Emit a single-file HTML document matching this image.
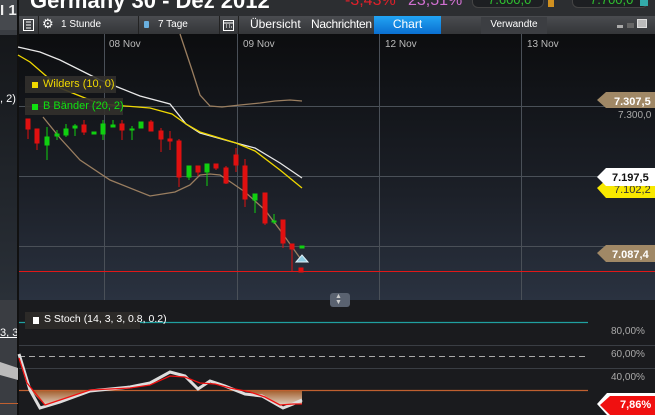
<!DOCTYPE html>
<html><head><meta charset="utf-8"><style>
*{margin:0;padding:0;box-sizing:border-box}
body{width:655px;height:415px;overflow:hidden;background:#1b1d21;font-family:"Liberation Sans",sans-serif;position:relative}
.abs{position:absolute}
.tb{font-size:11px;color:#fff}
</style></head><body>
<div class="abs" style="left:0;top:0;width:18px;height:415px;background:#3a3d42"></div>
<div class="abs" style="left:0;top:0;width:18px;height:30px;background:#46494e"></div>
<div class="abs tb" style="left:0;top:2px;font-size:15px;font-weight:bold;color:#eee">I 1</div>
<div class="abs" style="left:0;top:35px;width:18px;height:265px;background:linear-gradient(#15171a,#2a3038)"></div>
<div class="abs tb" style="left:0;top:93px;font-size:11px">, 2)</div>
<div class="abs tb" style="left:0;top:327px;font-size:11px;text-decoration:underline">3, 3</div>
<div class="abs" style="left:17px;top:0;width:2px;height:415px;background:#111"></div>
<div class="abs" style="left:19px;top:0;width:636px;height:16px;background:#2c2e31"></div>
<div class="abs" style="left:30px;top:-12px;font-size:22px;font-weight:bold;color:#fff">Germany 30 - Dez 2012</div>
<div class="abs" style="left:345px;top:-8px;font-size:16px;color:#e0202a">-3,43%</div>
<div class="abs" style="left:408px;top:-8px;font-size:16px;color:#d070d0">23,51%</div>
<div class="abs" style="left:472px;top:-6px;width:72px;height:14px;border-radius:6px;background:#1d1f22;border:1px solid #444"></div>
<div class="abs" style="left:488px;top:-8px;font-size:13px;color:#30c030">7.600,0</div>
<div class="abs" style="left:548px;top:0;width:6px;height:7px;background:#d09020"></div>
<div class="abs" style="left:572px;top:-6px;width:76px;height:14px;border-radius:6px;background:#1d1f22;border:1px solid #444"></div>
<div class="abs" style="left:590px;top:-8px;font-size:13px;color:#30c030">7.700,0</div>
<div class="abs" style="left:640px;top:-2px;width:8px;height:8px;background:#3aa"></div>
<div class="abs" style="left:19px;top:16px;width:636px;height:18px;background:linear-gradient(#4a4c50,#333538)"></div>
<div class="abs" style="left:19px;top:16px;width:20px;height:18px;border-right:1px solid #222"></div>
<svg class="abs" style="left:23px;top:19px" width="11" height="12"><rect x="0.5" y="0.5" width="10" height="11" fill="none" stroke="#fff"/><path d="M3 3h5M3 6h5M3 9h5" stroke="#fff"/></svg>
<div class="abs tb" style="left:42px;top:16px;font-size:13px">⚙</div>
<div class="abs tb" style="left:61px;top:19px;font-size:10px">1 Stunde</div>
<div class="abs" style="left:138px;top:16px;width:1px;height:18px;background:#222"></div>
<div class="abs" style="left:144px;top:21px;width:5px;height:7px;background:#6ab0e0;border-radius:1px"></div>
<div class="abs tb" style="left:158px;top:19px;font-size:10px">7 Tage</div>
<div class="abs" style="left:219px;top:16px;width:1px;height:18px;background:#222"></div>
<svg class="abs" style="left:223px;top:19px" width="11" height="12"><rect x="0.5" y="1.5" width="10" height="10" fill="none" stroke="#fff"/><path d="M1 4h9M3 6h1M6 6h1M3 8h1M6 8h1M8 8h1" stroke="#fff"/></svg>
<div class="abs" style="left:238px;top:16px;width:1px;height:18px;background:#222"></div>
<div class="abs tb" style="left:250px;top:17px;font-size:12px">Übersicht</div>
<div class="abs tb" style="left:311px;top:17px;font-size:12px;letter-spacing:-0.3px">Nachrichten</div>
<div class="abs tb" style="left:374px;top:16px;width:67px;height:18px;background:linear-gradient(#22a4f4,#0a6fd0);font-size:12px;text-align:center;line-height:16px">Chart</div>
<div class="abs tb" style="left:481px;top:17px;width:66px;height:17px;background:#3c3e42;font-size:10px;text-align:center;line-height:15px">Verwandte</div>
<div class="abs" style="left:617px;top:25px;width:6px;height:3px;background:#aaa"></div>
<div class="abs" style="left:627px;top:23px;width:7px;height:5px;background:#666"></div>
<div class="abs" style="left:637px;top:19px;width:10px;height:9px;background:#bbb;border:1px solid #ddd"></div>
<div class="abs" style="left:19px;top:34px;width:636px;height:266px;background:linear-gradient(#0c0d0f,#1c2028 60%,#2a3240)"></div>
<svg class="abs" style="left:0;top:0" width="655" height="415">
<g stroke="#4a5058" stroke-width="1">
<line x1="104.5" y1="34" x2="104.5" y2="300"/><line x1="237.5" y1="34" x2="237.5" y2="300"/><line x1="379.5" y1="34" x2="379.5" y2="300"/><line x1="521.5" y1="34" x2="521.5" y2="300"/>
<line x1="19" y1="106.5" x2="655" y2="106.5"/><line x1="19" y1="176.5" x2="655" y2="176.5"/><line x1="19" y1="246.5" x2="655" y2="246.5"/>
</g>
<line x1="19" y1="271.5" x2="655" y2="271.5" stroke="#e01818"/>
<g font-size="10" fill="#bbb"><text x="109" y="47">08 Nov</text><text x="243" y="47">09 Nov</text><text x="385" y="47">12 Nov</text><text x="527" y="47">13 Nov</text></g>
<polyline fill="none" stroke="#9a7e60" stroke-width="1.3" points="180,34 192,70 200,95 210,106 222,107 240,105 260,103 275,101 290,100 302,101"/>
<polyline fill="none" stroke="#9a7e60" stroke-width="1.3" points="43,117 60,138 80,160 110,180 150,196 175,192 190,185 200,175 210,174 220,175 232,183 245,192 265,210 280,230 300,258"/>
<polyline fill="none" stroke="#e8e8e8" stroke-width="1.3" points="18,47 40,52 60,60 100,80 140,96 170,104 186,124 200,133 236,143 255,148 280,163 302,178"/>
<polyline fill="none" stroke="#f0d800" stroke-width="1.3" points="18,55 30,62 45,75 60,88 100,104 150,108 172,114 186,124 200,132 236,143 255,151 280,170 302,188"/>
<g stroke-width="1">
<g fill="#e01010" stroke="#e01010">
<line x1="28" y1="119" x2="28" y2="139"/><rect x="26" y="119" width="4" height="10"/>
<line x1="37" y1="129" x2="37" y2="150"/><rect x="35" y="129" width="4" height="14"/>
<line x1="84" y1="120" x2="84" y2="135"/><rect x="82" y="125" width="4" height="7"/>
<line x1="122" y1="120" x2="122" y2="140"/><rect x="120" y="124" width="4" height="6"/>
<line x1="151" y1="120" x2="151" y2="131"/><rect x="149" y="122" width="4" height="9"/>
<line x1="161" y1="128" x2="161" y2="152"/><rect x="159" y="131" width="4" height="8"/>
<line x1="170" y1="131" x2="170" y2="150"/><rect x="168" y="139" width="4" height="2"/>
<line x1="179" y1="139" x2="179" y2="187"/><rect x="177" y="141" width="4" height="36"/>
<line x1="198" y1="166" x2="198" y2="176"/><rect x="196" y="166" width="4" height="6"/>
<line x1="216" y1="164" x2="216" y2="170"/><rect x="214" y="164" width="4" height="4"/>
<line x1="226" y1="166" x2="226" y2="184"/><rect x="224" y="168" width="4" height="15"/>
<line x1="236" y1="148" x2="236" y2="172"/><rect x="234" y="155" width="4" height="10"/>
<line x1="245" y1="159" x2="245" y2="207"/><rect x="243" y="166" width="4" height="33"/>
<line x1="265" y1="193" x2="265" y2="225"/><rect x="263" y="193" width="4" height="30"/>
<line x1="283" y1="220" x2="283" y2="248"/><rect x="281" y="220" width="4" height="23"/>
<line x1="292" y1="244" x2="292" y2="271"/><rect x="290" y="244" width="4" height="5"/>
<rect x="299" y="268" width="4" height="4"/>
</g>
<g fill="#10d010" stroke="#10d010">
<line x1="47" y1="127" x2="47" y2="160"/><rect x="45" y="137" width="4" height="8"/>
<line x1="57" y1="130" x2="57" y2="140"/><rect x="55" y="134" width="4" height="2"/>
<line x1="66" y1="124" x2="66" y2="137"/><rect x="64" y="129" width="4" height="6"/>
<line x1="75" y1="124" x2="75" y2="136"/><rect x="73" y="126" width="4" height="2"/>
<rect x="92" y="132" width="4" height="2"/>
<line x1="103" y1="120" x2="103" y2="140"/><rect x="101" y="124" width="4" height="10"/>
<line x1="113" y1="120" x2="113" y2="127"/><rect x="111" y="125" width="4" height="2"/>
<line x1="132" y1="126" x2="132" y2="140"/><rect x="130" y="129" width="4" height="1"/>
<line x1="141" y1="122" x2="141" y2="128"/><rect x="139" y="122" width="4" height="6"/>
<line x1="189" y1="166" x2="189" y2="180"/><rect x="187" y="166" width="4" height="11"/>
<line x1="207" y1="164" x2="207" y2="186"/><rect x="205" y="164" width="4" height="8"/>
<line x1="255" y1="194" x2="255" y2="213"/><rect x="253" y="194" width="4" height="6"/>
<line x1="274" y1="214" x2="274" y2="224"/><rect x="272" y="221" width="4" height="1"/>
<rect x="300" y="246" width="4" height="2"/>
</g>
</g>
<polygon points="296,262 302,255 308,262" fill="#8ccbe0" stroke="#e0f0f8"/>
<polygon points="597,100 606,92 655,92 655,108 606,108" fill="#a08866"/>
<text x="614" y="105" font-size="11" font-weight="bold" fill="#fff">7.307,5</text>
<text x="618" y="118" font-size="10" fill="#aaa">7.300,0</text>
<polygon points="597,188 606,180 655,180 655,198 606,198" fill="#f8e800"/>
<text x="614" y="193" font-size="11" fill="#333">7.102,2</text>
<polygon points="597,177 606,168 655,168 655,186 606,186" fill="#fff"/>
<text x="612" y="181" font-size="11" font-weight="bold" fill="#111">7.197,5</text>
<polygon points="597,253 606,245 655,245 655,262 606,262" fill="#a08866"/>
<text x="612" y="258" font-size="11" font-weight="bold" fill="#fff">7.087,4</text>
</svg>
<div class="abs" style="left:25px;top:76px;width:91px;height:17px;background:rgba(50,48,44,.9)"></div>
<div class="abs" style="left:32px;top:82px;width:6px;height:6px;background:#f0d800"></div>
<div class="abs" style="left:43px;top:78px;font-size:11px;color:#f0d800">Wilders (10, 0)</div>
<div class="abs" style="left:25px;top:98px;width:98px;height:17px;background:rgba(50,48,44,.9)"></div>
<div class="abs" style="left:32px;top:104px;width:6px;height:6px;background:#10e010"></div>
<div class="abs" style="left:43px;top:100px;font-size:11px;color:#10e010">B Bänder (20, 2)</div>
<div class="abs" style="left:19px;top:300px;width:636px;height:115px;background:#1a1b1e"></div>
<div class="abs" style="left:330px;top:293px;width:20px;height:14px;border-radius:3px;background:#5a6270"></div>
<div class="abs" style="left:335px;top:294px;font-size:7px;color:#ccc;line-height:6px">▲<br>▼</div>
<svg class="abs" style="left:0;top:0" width="655" height="415">
<line x1="19" y1="322.5" x2="588" y2="322.5" stroke="#20a0a0" stroke-width="1.3"/>
<line x1="19" y1="345.5" x2="655" y2="345.5" stroke="#3a3e44"/>
<line x1="19" y1="356.5" x2="588" y2="356.5" stroke="#aaa" stroke-dasharray="6,4"/>
<line x1="19" y1="368.5" x2="655" y2="368.5" stroke="#3a3e44"/>
<line x1="0" y1="403.5" x2="18" y2="403.5" stroke="#c06030"/>
<defs><linearGradient id="og" x1="0" y1="0" x2="0" y2="1"><stop offset="0" stop-color="#a05a28"/><stop offset="1" stop-color="#e0d0c0"/></linearGradient></defs>
<polygon points="30,390 45,405 60,400 90,390 302,390 302,404 293,404 280,405 265,397 250,392 240,390" fill="url(#og)"/>
<line x1="19" y1="390.5" x2="588" y2="390.5" stroke="#c06030" stroke-width="1.3"/>
<polyline fill="none" stroke="#ddd" stroke-width="3" points="19,354 30,390 40,408 60,402 90,391 130,387 150,383 170,372 185,376 198,389 210,381 225,386 245,394 262,396 283,408 293,404 302,400"/>
<polyline fill="none" stroke="#f01010" stroke-width="1.3" points="19,358 27,383 45,405 60,400 90,390 130,388 150,385 170,376 185,377 200,383 215,384 230,388 250,392 265,397 280,405 293,404 302,404"/>
<polygon points="0,362 18,368 18,380 0,375" fill="#bbb"/>
<g font-size="10" fill="#aaa"><text x="611" y="334">80,00%</text><text x="611" y="357">60,00%</text><text x="611" y="380">40,00%</text></g>
<polygon points="597,404 607,393 655,393 655,415 607,415" fill="#fff"/>
<polygon points="600,405 610,396 655,396 655,415 610,415" fill="#f01010"/>
<text x="620" y="408" font-size="11" font-weight="bold" fill="#fff">7,86%</text>
</svg>
<div class="abs" style="left:25px;top:312px;width:115px;height:17px;background:#2c2a28"></div>
<div class="abs" style="left:33px;top:317px;width:6px;height:7px;background:#fff"></div>
<div class="abs" style="left:44px;top:313px;font-size:10.5px;color:#fff">S Stoch (14, 3, 3, 0.8, 0.2)</div>
</body></html>
